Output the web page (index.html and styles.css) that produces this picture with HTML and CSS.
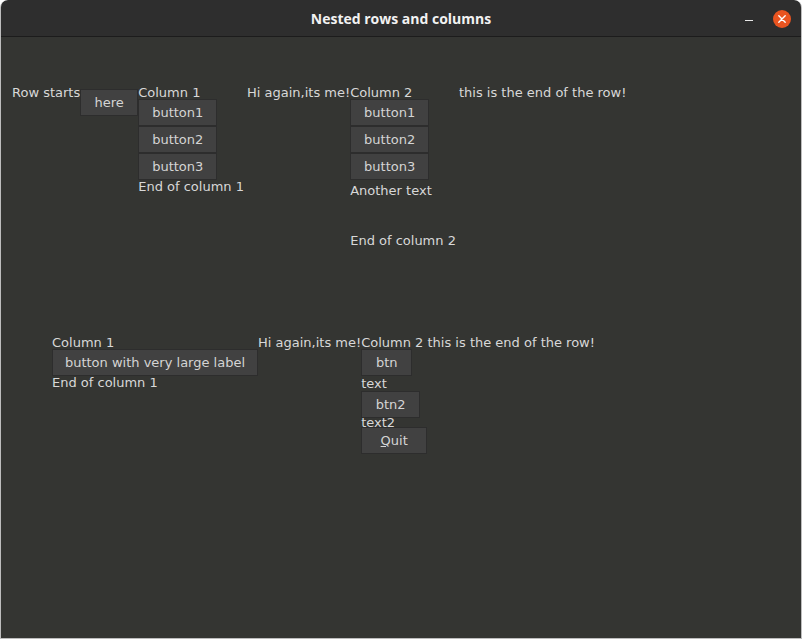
FILE: index.html
```html
<!DOCTYPE html>
<html lang="en">
<head>
    <meta charset="UTF-8">
    <title>Nested rows and columns</title>
    <link rel="stylesheet" href="styles.css">
</head>
<body>
    <div class="window">
        <div class="titlebar">
            <span class="title">Nested rows and columns</span>
            <span class="minimize"></span>
            <span class="close">
                <svg width="18" height="18" viewBox="0 0 18 18">
                    <circle cx="9" cy="9" r="9" fill="#e95420"/>
                    <path d="M5.8 5.8 L12.2 12.2 M12.2 5.8 L5.8 12.2" stroke="#fff" stroke-width="1.4" stroke-linecap="round"/>
                </svg>
            </span>
        </div>

        <div class="content">
            <!-- first row -->
            <div class="row row-one">
                <span class="label">Row starts</span>
                <button class="btn here">here</button>
                <div class="column padded">
                    <span class="label">Column 1</span>
                    <button class="btn wide">button1</button>
                    <button class="btn wide">button2</button>
                    <button class="btn wide">button3</button>
                    <span class="label">End of column 1</span>
                </div>
                <span class="label">Hi again,its me!</span>
                <div class="column padded">
                    <span class="label">Column 2</span>
                    <button class="btn wide">button1</button>
                    <button class="btn wide">button2</button>
                    <button class="btn wide">button3</button>
                    <span class="label another">Another text</span>
                    <span class="label end-two">End of column 2</span>
                </div>
                <span class="label">this is the end of the row!</span>
            </div>

            <!-- second row -->
            <div class="row row-two">
                <div class="column">
                    <span class="label">Column 1</span>
                    <button class="btn large">button with very large label</button>
                    <span class="label">End of column 1</span>
                </div>
                <span class="label">Hi again,its me!</span>
                <div class="column">
                    <span class="label">Column 2 this is the end of the row!</span>
                    <button class="btn small">btn</button>
                    <span class="label text-one">text</span>
                    <button class="btn small2">btn2</button>
                    <span class="label text-two">text2</span>
                    <button class="btn small3"><u>Q</u>uit</button>
                </div>
            </div>
        </div>
    </div>
</body>
</html>
```

FILE: styles.css
```css
html, body {
    margin: 0;
    padding: 0;
    background: #ffffff;
}
.window {
    width: 802px;
    height: 639px;
    display: flex;
    flex-direction: column;
    border-radius: 8px 8px 0 0;
    overflow: hidden;
    background: #bdbdbd;
}
.titlebar {
    height: 36px;
    background: #2e2e2e;
    border-bottom: 1px solid #1c1c1c;
    margin: 0 1px;
    position: relative;
    display: flex;
    align-items: center;
    justify-content: center;
    border-radius: 7px 7px 0 0;
}
.title {
    font-family: "Open Sans", "DejaVu Sans", sans-serif;
    font-weight: bold;
    font-size: 14px;
    color: #f2f2f2;
}
.minimize {
    position: absolute;
    left: 744px;
    top: 20px;
    width: 8px;
    height: 1px;
    background: #e8e8e8;
}
.close {
    position: absolute;
    left: 772px;
    top: 10px;
    width: 18px;
    height: 18px;
}
.content {
    flex: 1;
    margin: 0 1px 1px 1px;
    background: #343532;
    font-family: "DejaVu Sans", sans-serif;
    font-size: 13px;
    color: #d8d8d8;
}
.row {
    display: flex;
    align-items: flex-start;
}
.row-one {
    padding: 49px 0 0 11px;
}
.row-two {
    padding: 89px 0 0 51px;
}
.column {
    display: flex;
    flex-direction: column;
    align-items: flex-start;
}
.padded {
    padding-right: 3px;
}
.label {
    line-height: 13px;
    white-space: nowrap;
}
.btn {
    font-family: "DejaVu Sans", sans-serif;
    font-size: 13px;
    color: #d4d4d4;
    background: #414141;
    border: 1px solid #2d2d2d;
    height: 27px;
    padding: 0;
    margin: 0;
}
.here {
    width: 58px;
    margin-top: 3px;
}
.wide {
    width: 79px;
}
.another {
    margin-top: 4px;
}
.end-two {
    margin-top: 37px;
}
.large {
    width: 206px;
}
.small {
    width: 51px;
}
.small2 {
    width: 59px;
}
.small3 {
    width: 66px;
}
.text-one {
    line-height: 15px;
    height: 15px;
}
.text-two {
    line-height: 9px;
    height: 9px;
}
```
